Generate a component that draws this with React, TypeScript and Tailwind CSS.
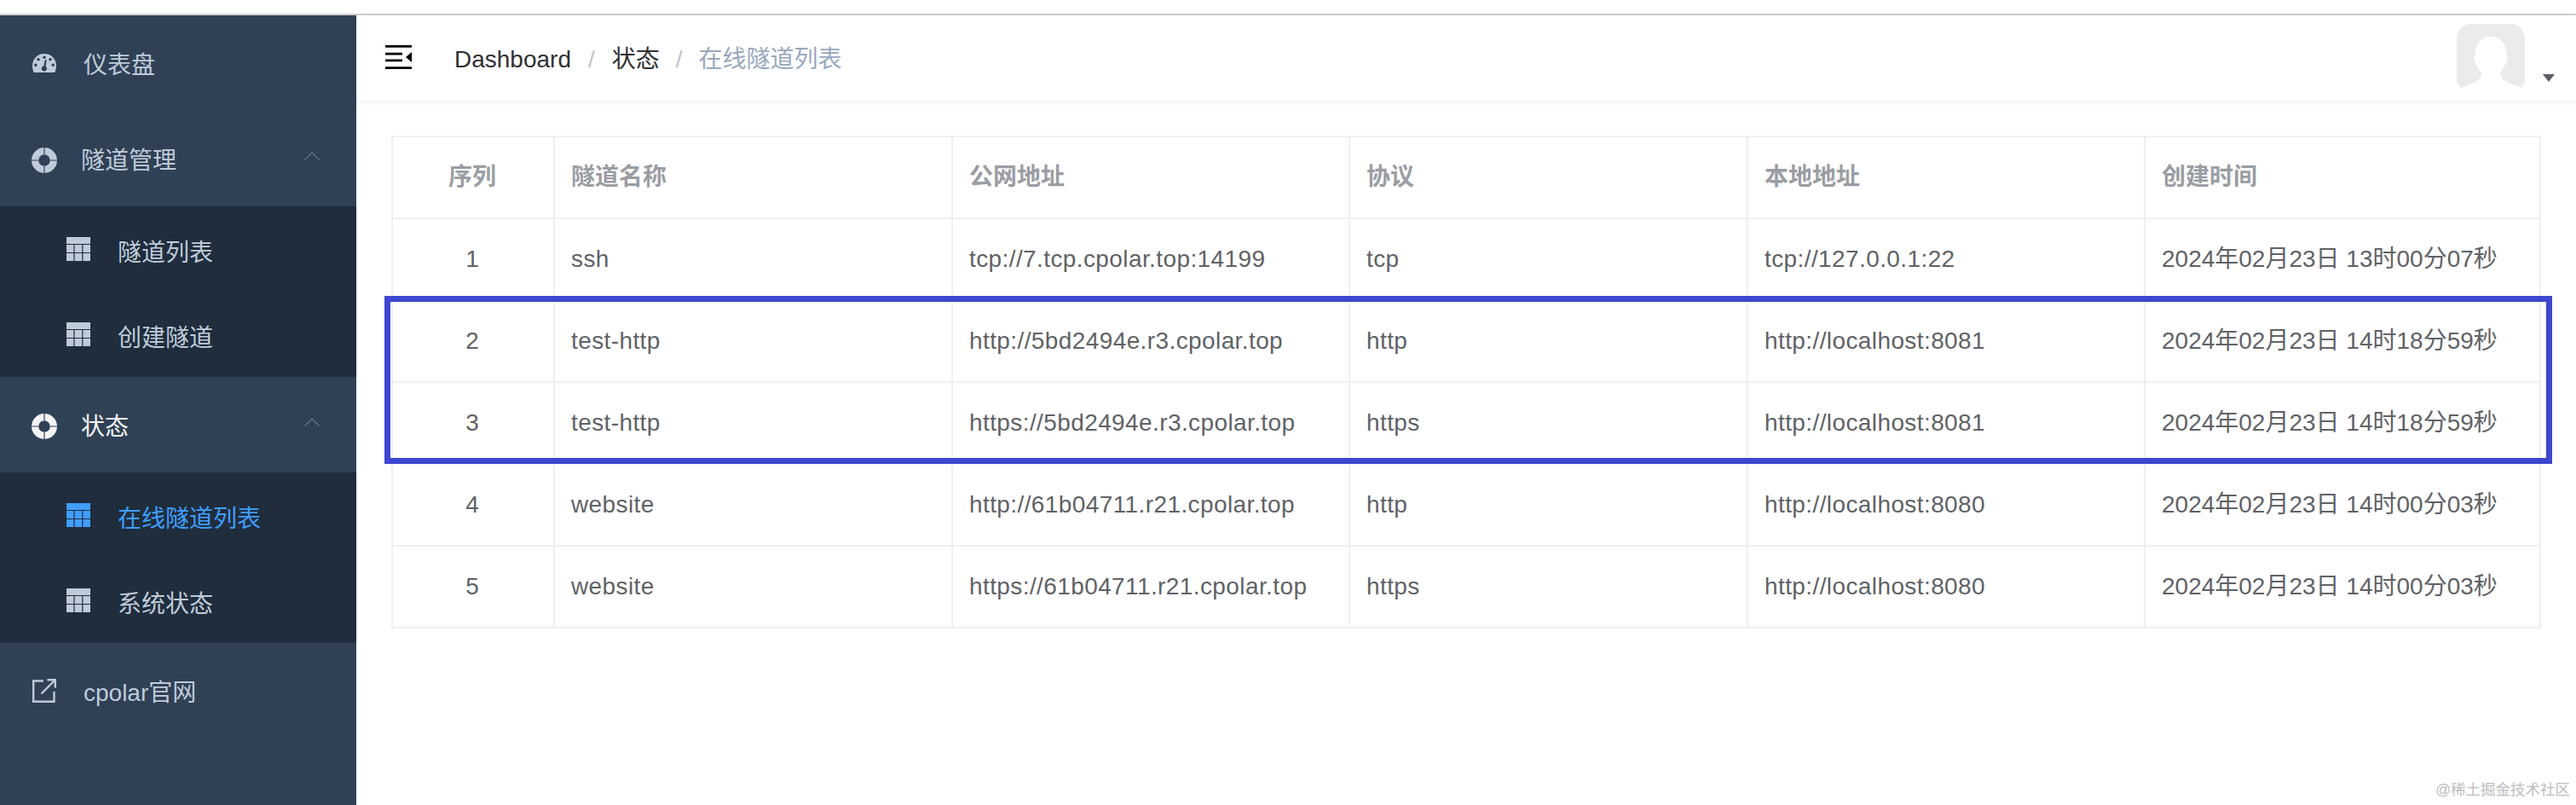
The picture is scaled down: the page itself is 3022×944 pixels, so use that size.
const font = "font-['Liberation_Sans','Noto_Sans_CJK_SC',sans-serif]"

const columns = ["序列", "隧道名称", "公网地址", "协议", "本地地址", "创建时间"]

const tunnels = [
  { id: 1, name: "ssh", url: "tcp://7.tcp.cpolar.top:14199", protocol: "tcp", local: "tcp://127.0.0.1:22", created: "2024年02月23日 13时00分07秒" },
  { id: 2, name: "test-http", url: "http://5bd2494e.r3.cpolar.top", protocol: "http", local: "http://localhost:8081", created: "2024年02月23日 14时18分59秒" },
  { id: 3, name: "test-http", url: "https://5bd2494e.r3.cpolar.top", protocol: "https", local: "http://localhost:8081", created: "2024年02月23日 14时18分59秒" },
  { id: 4, name: "website", url: "http://61b04711.r21.cpolar.top", protocol: "http", local: "http://localhost:8080", created: "2024年02月23日 14时00分03秒" },
  { id: 5, name: "website", url: "https://61b04711.r21.cpolar.top", protocol: "https", local: "http://localhost:8080", created: "2024年02月23日 14时00分03秒" },
]

const GaugeIcon = () => (
  <svg viewBox="0 0 28 22" className="h-[22px] w-[28px]">
    <path
      fill="currentColor"
      fillRule="evenodd"
      d="M14 0C6.3 0 0 6.2 0 14c0 2.9.7 5.700 1.500 7.300l.5.700h24l.5-.7c.8-1.600 1.500-4.400 1.500-7.300C28 6.200 21.700 0 14 0ZM14 2.500a1.800 1.800 0 1 1 0 3.600 1.800 1.800 0 0 1 0-3.600ZM7 5a1.800 1.800 0 1 1 0 3.600A1.800 1.800 0 0 1 7 5Zm14 0a1.800 1.800 0 1 1 0 3.600A1.800 1.800 0 0 1 21 5ZM3.800 11.500a1.800 1.800 0 1 1 0 3.600 1.800 1.800 0 0 1 0-3.600Zm20.400 0a1.800 1.800 0 1 1 0 3.600 1.800 1.800 0 0 1 0-3.600ZM16.800 7.500l-1.300 7.300a3.100 3.100 0 1 1-2.300-.4l1.700-7.300Z"
    />
  </svg>
)

const BuoyIcon = () => (
  <svg viewBox="0 0 30 30" className="mt-[4px] h-[30px] w-[30px]">
    <path
      fill="currentColor"
      fillRule="evenodd"
      d="M15 0a15 15 0 1 1 0 30 15 15 0 0 1 0-30Zm0 8.200a6.800 6.800 0 1 0 0 13.600 6.800 6.800 0 0 0 0-13.600Z"
    />
    <path d="M15 8V0M15 22v8M8 15H0M22 15h8" stroke="#304156" strokeWidth="1.200" />
  </svg>
)

const TableIcon = () => (
  <svg viewBox="0 0 28 28" className="h-[28px] w-[28px]">
    <rect width="28" height="28" fill="currentColor" />
    <path d="M0 8.500h28M0 18.500h28M9 8.500V28M18.800 8.500V28" stroke="#1f2d3d" strokeWidth="1.200" />
  </svg>
)

const LinkIcon = () => (
  <svg viewBox="0 0 28 28" className="h-[28px] w-[28px]" fill="none" stroke="currentColor" strokeWidth="2.400">
    <path d="M13 2.500H1.200v24.300h24.300V15" />
    <path d="M10.500 17.500 26 2" />
    <path d="M17.500 1.200h9.300v9.300" />
  </svg>
)

const CollapseIcon = () => (
  <svg viewBox="0 0 31 28" className="mb-[2px] h-[28px] w-[31px]">
    <path d="M0 0h31v2.800H0ZM0 25.200h31V28H0ZM0 8.800h20v2.600H0ZM0 16.600h20v2.600H0Z" fill="#000" />
    <path d="M31 8v12l-7-6Z" fill="#000" />
  </svg>
)

const Chevron = () => (
  <svg viewBox="0 0 18 10" className="mr-[43px] mb-[6px] ml-auto h-[10px] w-[18px]" fill="none" stroke="#8b98a8" strokeWidth="1">
    <path d="M.5 9.500 9 1l8.500 8.500" />
  </svg>
)

const SubItem = ({ label, active }: { label: string; active?: boolean }) => (
  <div className={`flex h-[100px] items-center pl-[78px] ${active ? "text-[#409eff]" : "text-[#bfcbd9]"}`}>
    <TableIcon />
    <span className="mt-[9px] ml-[32px] text-[28px]">{label}</span>
  </div>
)

const Sidebar = () => (
  <aside className="flex w-[418px] shrink-0 flex-col bg-[#304156] text-[#bfcbd9]">
    <div className="flex h-[112px] items-center pl-[38px]">
      <GaugeIcon />
      <span className="mt-[5px] ml-[32px] text-[28px]">仪表盘</span>
    </div>
    <div className="flex h-[112px] items-center pl-[37px]">
      <BuoyIcon />
      <span className="mt-[5px] ml-[28px] text-[28px]">隧道管理</span>
      <Chevron />
    </div>
    <div className="bg-[#1f2d3d]">
      <SubItem label="隧道列表" />
      <SubItem label="创建隧道" />
    </div>
    <div className="flex h-[112px] items-center pl-[37px] text-[#f4f4f5]">
      <BuoyIcon />
      <span className="mt-[5px] ml-[28px] text-[28px]">状态</span>
      <Chevron />
    </div>
    <div className="bg-[#1f2d3d]">
      <SubItem label="在线隧道列表" active />
      <SubItem label="系统状态" />
    </div>
    <div className="flex h-[112px] items-center pl-[38px]">
      <LinkIcon />
      <span className="mt-[5px] ml-[32px] text-[28px]">cpolar官网</span>
    </div>
  </aside>
)

const Navbar = () => (
  <header className="flex h-[100px] items-center pr-[25px] pl-[34px] shadow-[0_2px_6px_rgba(0,21,41,0.06)]">
    <CollapseIcon />
    <nav className="mt-[3px] ml-[50px] flex items-center text-[28px] text-[#303133]">
      <span>Dashboard</span>
      <span className="mx-[20px] text-[#c0c4cc]">/</span>
      <span>状态</span>
      <span className="mx-[19px] text-[#c0c4cc]">/</span>
      <span className="text-[#97a8be]">在线隧道列表</span>
    </nav>
    <div className="mb-[5px] ml-auto flex items-end">
      <svg viewBox="0 0 80 75" className="h-[75px] w-[80px]">
        <path
          fill="#ebebeb"
          fillRule="evenodd"
          d="M18 0h44c11 0 18 7 18 18v50l-4 7-16-6c-6-3-9-7-9-10 0-3 3-5 6-11 1-3 3-4 3-8 0-3-2-4-2-7 0-10-7-18-18-18s-18 8-18 18c0 3-2 4-2 7 0 4 2 5 3 8 3 6 6 8 6 11 0 3-3 7-9 10L5 75l-5-7V18C0 7 7 0 18 0Z"
        />
      </svg>
      <span className="mb-[7px] ml-[21px] h-0 w-0 border-x-[7px] border-t-[9px] border-x-transparent border-t-[#5a5e66]" />
    </div>
  </header>
)

const TunnelTable = () => (
  <div className="relative mx-[41px] mt-[41px]">
    <table className="w-full table-fixed border-collapse border-2 border-[#eeeff3] text-[28px] text-[#606266]">
      <colgroup>
        <col className="w-[190px]" />
        <col className="w-[467px]" />
        <col className="w-[466px]" />
        <col className="w-[467px]" />
        <col className="w-[466px]" />
        <col />
      </colgroup>
      <thead>
        <tr className="h-[96px]">
          {columns.map((c, i) => (
            <th
              key={c}
              className={`border-2 border-[#eeeff3] font-bold text-[#9a9da3] ${i === 0 ? "pr-[2px] text-center" : "pl-[19px] text-left"}`}
            >
              {c}
            </th>
          ))}
        </tr>
      </thead>
      <tbody>
        {tunnels.map((t) => (
          <tr key={t.id} className="h-[96px]">
            <td className="border-2 border-[#eeeff3] pr-[2px] text-center">{t.id}</td>
            <td className="border-2 border-[#eeeff3] pl-[19px] tracking-[0.4px]">{t.name}</td>
            <td className="border-2 border-[#eeeff3] pl-[19px] tracking-[0.4px]">{t.url}</td>
            <td className="border-2 border-[#eeeff3] pl-[19px] tracking-[0.4px]">{t.protocol}</td>
            <td className="border-2 border-[#eeeff3] pl-[19px] tracking-[0.4px]">{t.local}</td>
            <td className="border-2 border-[#eeeff3] pl-[19px]">{t.created}</td>
          </tr>
        ))}
      </tbody>
    </table>
    {/* annotation drawn over the screenshot */}
    <div className="absolute top-[188px] -right-[13px] -left-[8px] h-[197px] border-[7px] border-[#3e47cf]" />
  </div>
)

export default function App() {
  return (
    <div className={`relative flex h-[944px] flex-col overflow-hidden bg-white ${font}`}>
      <div className="h-[18px] shrink-0 border-b-2 border-[#cfcfcf]" />
      <div className="flex min-h-0 flex-1">
        <Sidebar />
        <main className="min-w-0 flex-1">
          <Navbar />
          <TunnelTable />
        </main>
      </div>
      <span className="absolute right-[7px] bottom-[5px] text-[17.5px] text-[#bdbdbd]">@稀土掘金技术社区</span>
    </div>
  )
}
